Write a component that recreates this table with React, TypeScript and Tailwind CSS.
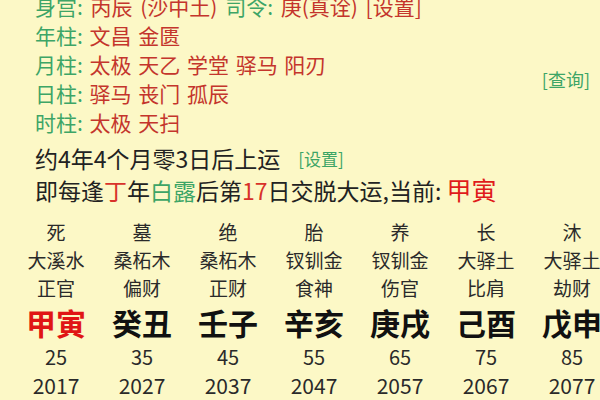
const FONT = "font-['Noto_Sans_CJK_SC','Noto_Sans',sans-serif]";

const PILLARS = [
  { label: "年柱", value: "文昌 金匮" },
  { label: "月柱", value: "太极 天乙 学堂 驿马 阳刃" },
  { label: "日柱", value: "驿马 丧门 孤辰" },
  { label: "时柱", value: "太极 天扫" },
];

const DAYUN = [
  { stage: "死", nayin: "大溪水", shen: "正官", gz: "甲寅", age: 25, year: 2017, current: true },
  { stage: "墓", nayin: "桑柘木", shen: "偏财", gz: "癸丑", age: 35, year: 2027 },
  { stage: "绝", nayin: "桑柘木", shen: "正财", gz: "壬子", age: 45, year: 2037 },
  { stage: "胎", nayin: "钗钏金", shen: "食神", gz: "辛亥", age: 55, year: 2047 },
  { stage: "养", nayin: "钗钏金", shen: "伤官", gz: "庚戌", age: 65, year: 2057 },
  { stage: "长", nayin: "大驿土", shen: "比肩", gz: "己酉", age: 75, year: 2067 },
  { stage: "沐", nayin: "大驿土", shen: "劫财", gz: "戊申", age: 85, year: 2077 },
];

export default function App() {
  return (
    <div className={`w-[600px] h-[400px] overflow-hidden bg-[#fcf8c6] ${FONT}`}>
      <div className="pl-[35px] pr-[10px] mt-[-8px] text-[21px] leading-[29px]">
        <div className="whitespace-nowrap [word-spacing:3px]">
          <span className="text-[#3da566]">身宫: </span>
          <span className="text-[#c4352c]">丙辰 (沙中土) </span>
          <span className="text-[#3da566]">司令: </span>
          <span className="text-[#c4352c]">庚(真诠) [设置]</span>
        </div>
        <div className="flex items-center justify-between">
          <div className="[word-spacing:2px]">
            {PILLARS.map((p) => (
              <div key={p.label} className="whitespace-nowrap">
                <span className="text-[#3da566]">{p.label}: </span>
                <span className="text-[#c4352c]">{p.value}</span>
              </div>
            ))}
          </div>
          <span className="text-[18px] text-[#3da566]">[查询]</span>
        </div>
        <div className="mt-[7px] flex items-center gap-[18px] text-[23px] text-[#222]">
          <span>约4年4个月零3日后上运</span>
          <span className="text-[17px] text-[#3da566]">[设置]</span>
        </div>
        <div className="mt-[3px] whitespace-nowrap text-[23px] text-[#222]">
          即每逢<span className="text-[#d8322a]">丁</span>年
          <span className="text-[#3da566]">白露</span>后第
          <span className="text-[#d8322a]">17</span>日交脱大运,当前:{" "}
          <span className="text-[25px] leading-none text-[#e01b1b]">甲寅</span>
        </div>
      </div>
      <div className="mt-[13px] pl-[13px] flex text-[#2a2a2a]">
        {DAYUN.map((d) => (
          <div key={d.gz} className="w-[86px] shrink-0 flex flex-col items-center whitespace-nowrap">
            <div className="text-[19px] leading-[28px]">{d.stage}</div>
            <div className="text-[19px] leading-[28px]">{d.nayin}</div>
            <div className="text-[19px] leading-[28px]">{d.shen}</div>
            <div
              className={`text-[30px] leading-[41px] font-bold ${d.current ? "text-[#e01515]" : "text-[#111]"}`}
            >
              {d.gz}
            </div>
            <div className="text-[20px] leading-[28px]">{d.age}</div>
            <div className="text-[21px] leading-[28px]">{d.year}</div>
          </div>
        ))}
      </div>
    </div>
  );
}
